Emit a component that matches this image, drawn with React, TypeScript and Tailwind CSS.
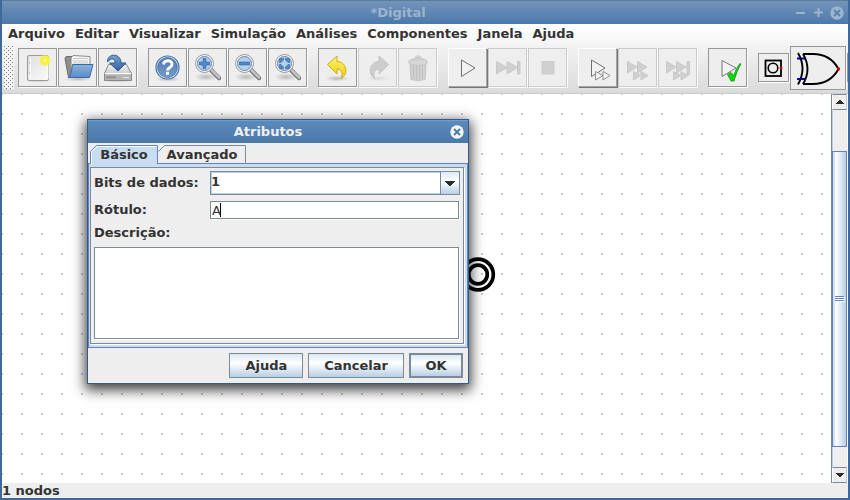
import type { ReactNode } from "react";

type Variant = "normal" | "disabled" | "raised";

function ToolButton({ label, variant = "normal", children }: { label: string; variant?: Variant; children: ReactNode }) {
  const look = {
    normal: "border border-[#969896] shadow-[1px_1px_0_#fff]",
    disabled: "border border-[#cbcbcb] shadow-[1px_1px_0_#fbfbfb]",
    raised: "border border-t-white border-l-white border-r-[#a5a5a5] border-b-[#a5a5a5] shadow-[1px_1px_0_#757575]",
  }[variant];
  return (
    <button type="button" aria-label={label} disabled={variant === "disabled"} className={`flex size-[39px] shrink-0 items-center justify-center bg-[#eeeeee] ${look}`}>
      {children}
    </button>
  );
}

function Glyph({ children }: { children: ReactNode }) {
  return (
    <svg viewBox="0 0 37 37" className="size-[37px]" aria-hidden="true">
      {children}
    </svg>
  );
}

function Group({ children }: { children: ReactNode }) {
  return <div className="flex shrink-0 items-center gap-px">{children}</div>;
}

function Defs() {
  return (
    <svg className="absolute size-0" aria-hidden="true">
      <defs>
        <radialGradient id="glow">
          <stop offset="0" stopColor="#fffde0" />
          <stop offset="0.35" stopColor="#f8f02a" />
          <stop offset="0.7" stopColor="#f7f13a" stopOpacity="0.8" />
          <stop offset="1" stopColor="#f5f060" stopOpacity="0" />
        </radialGradient>
        <radialGradient id="shade">
          <stop offset="0" stopColor="#000" stopOpacity="0.22" />
          <stop offset="1" stopColor="#000" stopOpacity="0" />
        </radialGradient>
        <linearGradient id="page" x1="0" y1="0" x2="1" y2="1">
          <stop offset="0" stopColor="#dedede" />
          <stop offset="1" stopColor="#fbfbfb" />
        </linearGradient>
        <linearGradient id="folder" x1="0" y1="0" x2="0" y2="1">
          <stop offset="0" stopColor="#8ab2de" />
          <stop offset="1" stopColor="#5a8dc8" />
        </linearGradient>
        <linearGradient id="metal" x1="0" y1="0" x2="0" y2="1">
          <stop offset="0" stopColor="#f2f2f2" />
          <stop offset="1" stopColor="#b2b2b2" />
        </linearGradient>
        <linearGradient id="arrow" x1="0" y1="0" x2="0" y2="1">
          <stop offset="0" stopColor="#7ba3d2" />
          <stop offset="1" stopColor="#2f5f9d" />
        </linearGradient>
        <linearGradient id="ball" x1="0" y1="0" x2="0" y2="1">
          <stop offset="0" stopColor="#4a76ae" />
          <stop offset="1" stopColor="#7a9dca" />
        </linearGradient>
        <linearGradient id="gold" x1="0" y1="0" x2="0" y2="1">
          <stop offset="0" stopColor="#fff27a" />
          <stop offset="1" stopColor="#edd000" />
        </linearGradient>
      </defs>
    </svg>
  );
}

function Lens({ sign }: { sign: string }) {
  return (
    <Glyph>
      <ellipse cx="17" cy="28" rx="12" ry="4" fill="url(#shade)" />
      <path d="M22.5 21.5 30 29" stroke="#777" strokeWidth="4.5" strokeLinecap="round" />
      <path d="M23 21.5 30 28.5" stroke="#c3c3c3" strokeWidth="2.5" strokeLinecap="round" />
      <circle cx="15.5" cy="14.5" r="9" fill="#f6f6f6" stroke="#999b98" />
      <circle cx="15.5" cy="14.5" r="7" fill="#b8cfe9" stroke="#6688b3" />
      <path d={sign} fill="#5287c5" stroke="#3465a4" strokeWidth="0.6" />
    </Glyph>
  );
}

const play = "M13 11.5 27 19 13 27.5Z";

function MainToolbar() {
  return (
    <div role="toolbar" aria-label="Ferramentas" className="flex h-[45px] items-center gap-[11px] overflow-hidden pl-0.5">
      <svg className="-mr-[7px] h-[43px] w-2.5 shrink-0" aria-hidden="true">
        <pattern id="grip" width="4" height="4" patternUnits="userSpaceOnUse">
          <rect width="4" height="4" fill="#f4f4f4" />
          <path d="M0 0h1v1H0zM2 2h1v1H2z" fill="#777d85" />
        </pattern>
        <rect width="100%" height="100%" fill="url(#grip)" shapeRendering="crispEdges" />
      </svg>
      <Group>
        <ToolButton label="Novo">
          <Glyph>
            <ellipse cx="19" cy="31.500" rx="13" ry="2" fill="url(#shade)" />
            <rect x="8.500" y="6.500" width="21" height="25" rx="1.500" fill="url(#page)" stroke="#9b9b99" />
            <path d="M11.500 8v22M29 8v22" stroke="#fff" />
            <circle cx="10.500" cy="14" r="0.700" fill="#aaa" />
            <circle cx="10.500" cy="24" r="0.700" fill="#aaa" />
            <circle cx="26" cy="11.500" r="6.500" fill="url(#glow)" />
          </Glyph>
        </ToolButton>
        <ToolButton label="Abrir">
          <Glyph>
            <ellipse cx="19" cy="30" rx="14" ry="2.500" fill="url(#shade)" />
            <path d="M6 9.500q0-2 2-2h5l1.500 2h4v19H9.500Z" fill="#8e908c" stroke="#6c6e6a" />
            <path d="m12 9 2-2.500 17 1V21H12Z" fill="#f5f5f5" stroke="#888a85" />
            <path d="M14 9.500h15M14 12h15M14 14h15" stroke="#c8c8c8" />
            <path d="M13.500 15.500h20.500l-3.500 13H9.500q2.500-2 4-13Z" fill="url(#folder)" stroke="#3769a9" />
          </Glyph>
        </ToolButton>
        <ToolButton label="Salvar">
          <Glyph>
            <ellipse cx="19" cy="31.500" rx="14" ry="2" fill="url(#shade)" />
            <path d="M9.500 15.500h18l5 9v7h-27v-7Z" fill="url(#metal)" stroke="#898989" strokeLinejoin="round" />
            <path d="M6 24.500h26" stroke="#fff" />
            <path d="M6 25.500h26v5.500H6z" fill="#b5b5b5" />
            <path d="M8 27v2.500m2-2.500v2.500m2-2.500v2.500m2-2.500v2.500m2-2.500v2.500" stroke="#777" />
            <path d="M24 28.500h6" stroke="#e7e7e7" />
            <path d="M8.500 13C8 4 22 3.500 22 14h5l-8 8-8.500-8H16c0-4.500-3.500-6-7.500-1Z" fill="url(#arrow)" stroke="#2f5d98" strokeLinejoin="round" />
          </Glyph>
        </ToolButton>
      </Group>
      <Group>
        <ToolButton label="Ajuda">
          <Glyph>
            <ellipse cx="19" cy="30" rx="13" ry="3" fill="url(#shade)" />
            <circle cx="18.500" cy="18.500" r="11.500" fill="#fff" stroke="#3f6fa9" strokeWidth="1.200" />
            <circle cx="18.500" cy="18.500" r="10" fill="url(#ball)" stroke="#3e6daa" strokeWidth="0.800" />
            <path d="M14.500 15.500c.5-5 9-5 8.500 0 0 3-4.500 3-4.500 6" fill="none" stroke="#fff" strokeWidth="3" />
            <rect x="17" y="22.800" width="3" height="3" rx="0.600" fill="#fff" />
          </Glyph>
        </ToolButton>
        <ToolButton label="Aumentar zoom">
          <Lens sign="M14 9.500h3V13h3.500v3H17v3.500h-3V16h-3.500v-3H14Z" />
        </ToolButton>
        <ToolButton label="Diminuir zoom">
          <Lens sign="M10.500 13h10v3h-10Z" />
        </ToolButton>
        <ToolButton label="Ajustar zoom">
          <Lens sign="M10.500 9.500h4v1.500l-2.500 2.500h-1.500ZM16.500 9.500h4v4h-1.500l-2.500-2.500ZM10.500 15.500H12l2.500 2.500v1.500h-4ZM20.500 15.500v4h-4V18l2.500-2.500Z" />
        </ToolButton>
      </Group>
      <Group>
        <ToolButton label="Desfazer">
          <Glyph>
            <ellipse cx="18" cy="29.500" rx="12" ry="3" fill="url(#shade)" />
            <path d="M8.500 15.500 18 7v5.500c9 0 12.500 12 4 17 3-6-.5-9.500-4-9.500v5Z" fill="url(#gold)" stroke="#c7a600" strokeWidth="0.900" strokeLinejoin="round" />
          </Glyph>
        </ToolButton>
        <ToolButton label="Refazer" variant="disabled">
          <Glyph>
            <ellipse cx="19" cy="29.500" rx="12" ry="3" fill="url(#shade)" opacity="0.400" />
            <path d="M29.500 15.500 20 7v5.500c-9 0-12.500 12-4 17-3-6 .5-9.500 4-9.500v5Z" fill="#cdcdcd" stroke="#c1c1c1" strokeWidth="0.900" strokeLinejoin="round" />
          </Glyph>
        </ToolButton>
        <ToolButton label="Apagar" variant="disabled">
          <Glyph>
            <path d="M11 15.500h16l-1 15q-7 2-14 0Z" fill="#d0d0d0" stroke="#c4c4c4" />
            <path d="M14.500 17v12M17.500 17v13M20.500 17v13M23.500 17v12" stroke="#c0c0c0" />
            <ellipse cx="19" cy="13" rx="9.500" ry="3.500" fill="#d6d6d6" stroke="#c4c4c4" />
            <path d="M14 11.500c0-4 10-4 10 0" fill="#cfcfcf" stroke="#c4c4c4" />
            <path d="M16.500 8c0-1.500 5-1.500 5 0" fill="none" stroke="#bdbdbd" />
          </Glyph>
        </ToolButton>
      </Group>
      <Group>
        <ToolButton label="Iniciar simulação" variant="raised">
          <Glyph>
            <path d="M12.500 11 26 19l-13.500 8.500Z" fill="#f2f2f2" stroke="#6e706c" />
          </Glyph>
        </ToolButton>
        <ToolButton label="Executar até parar" variant="disabled">
          <Glyph>
            <path d="M7.500 12.500 18 18.500l-10.500 6.500ZM18 12.500l10.500 6L18 25ZM28.500 12.500h2.500V25h-2.500Z" fill="#d0d0d0" stroke="#c8c8c8" />
          </Glyph>
        </ToolButton>
        <ToolButton label="Parar" variant="disabled">
          <Glyph>
            <path d="M13 12.500h12V25H13Z" fill="#d0d0d0" stroke="#cccccc" />
          </Glyph>
        </ToolButton>
      </Group>
      <Group>
        <ToolButton label="Passo" variant="raised">
          <Glyph>
            <path d="M12.500 11 26 19l-13.500 8.500Z" fill="#f2f2f2" stroke="#6e706c" />
            <path d="m16.500 22.500 7.500 4-7.500 4.500ZM24 22.500l7 4-7 4.500Z" fill="#f5f5f5" stroke="#858784" strokeWidth="0.900" />
          </Glyph>
        </ToolButton>
        <ToolButton label="Avançar" variant="disabled">
          <Glyph>
            <path d="M8.500 12.500 18 18l-9.500 6ZM18.500 12.500l9.500 5.500-9.500 6ZM14.500 22.500l7 4-7 4.500ZM22 22.500l7 4-7 4.500Z" fill="#d0d0d0" stroke="#c8c8c8" />
          </Glyph>
        </ToolButton>
        <ToolButton label="Avançar até parar" variant="disabled">
          <Glyph>
            <path d="M7.500 12.500 17 18l-9.500 6ZM17.500 12.500l9.500 5.500-9.500 6ZM28 12.500h2.500V26H28ZM14.500 22.500l7 4-7 4.500ZM22 22.500l7 4-7 4.500Z" fill="#d0d0d0" stroke="#c8c8c8" />
          </Glyph>
        </ToolButton>
      </Group>
      <Group>
        <ToolButton label="Executar testes">
          <Glyph>
            <path d={play} fill="#f2f2f2" stroke="#777975" />
            <path d="m18.500 25.500 3.500-2 3 3c1-4 3.500-9 6-12l1 .5c-3 4.500-5 10-7 17h-3Z" fill="#0fd80f" stroke="#159a15" strokeWidth="0.900" strokeLinejoin="round" />
          </Glyph>
        </ToolButton>
      </Group>
      <Group>
        <button type="button" aria-label="Entrada" className="flex h-[29px] w-[31px] shrink-0 items-center justify-center border border-[#969896] bg-[#eeeeee] shadow-[1px_1px_0_#fff]">
          <svg viewBox="0 0 29 27" className="h-[27px] w-[29px]" aria-hidden="true">
            <rect x="6.500" y="6.500" width="15.500" height="15.500" fill="none" stroke="#000" strokeWidth="1.800" />
            <circle cx="14" cy="14" r="4.800" fill="none" stroke="#000" strokeWidth="1.600" />
            <circle cx="22" cy="14" r="1.500" fill="#d00" />
          </svg>
        </button>
        <button type="button" aria-label="XOU" className="flex h-[44px] w-14 shrink-0 items-center justify-center border border-[#969896] bg-[#eeeeee] shadow-[1px_1px_0_#fff]">
          <svg viewBox="0 0 54 42" className="h-[42px] w-[54px]" fill="none" aria-hidden="true">
            <path d="M6 11.500h8M6 32h8" stroke="#0000c8" strokeWidth="2" />
            <path d="M7 6q9 15.500 0 31.500M12 7q9 15 0 30M12 7h10c12 0 20 5 25.500 15-5.500 10-13.500 15-25.500 15H12" stroke="#000" strokeWidth="1.900" />
            <circle cx="47.500" cy="22" r="1.700" fill="#d00" />
          </svg>
        </button>
        <button type="button" aria-label="Próximo componente" className="h-[29px] w-[31px] shrink-0 border border-[#969896] bg-[#eeeeee]" />
      </Group>
    </div>
  );
}

function CloseIcon({ disc, cross }: { disc: string; cross: string }) {
  return (
    <svg viewBox="0 0 14 14" className="size-3.5" aria-hidden="true">
      <circle cx="7" cy="7" r="6.700" fill={disc} />
      <path d="m4 4 6 6m0-6-6 6" stroke={cross} strokeWidth="1.800" />
    </svg>
  );
}

function Triangle({ up = false }: { up?: boolean }) {
  return (
    <svg viewBox="0 0 8 4" className="h-1 w-2" shapeRendering="crispEdges" aria-hidden="true">
      <path d={up ? "M3 0h2v1h1v1h1v1h1v1H0V3h1V2h1V1h1Z" : "M0 0h8v1H7v1H6v1H5v1H3V3H2V2H1V1H0Z"} fill="#2b2b2b" />
    </svg>
  );
}

function ScrollBar() {
  return (
    <div role="scrollbar" aria-label="Rolagem vertical" aria-controls="circuito" aria-valuenow={30} className="flex w-[17px] shrink-0 flex-col border-r border-l border-r-white border-l-[#7a8a99] bg-[#eeeeee]">
      <button type="button" aria-label="Rolar para cima" className="flex h-4 items-center justify-center border border-t-[#7a8a99] border-r-[#b8cfe5] border-b-[#7a8a99] border-l-white">
        <Triangle up />
      </button>
      <div className="flex flex-1 flex-col border-l border-[#b8cfe5]">
        <div className="flex-[41]" />
        <div className="-ml-px flex flex-[296] items-center justify-center border border-[#6382bf] bg-linear-to-r from-[#c3d7ec] via-white via-25% to-[#b8cfe5]">
          <svg viewBox="0 0 10 6" className="h-1.5 w-2.5" shapeRendering="crispEdges" aria-hidden="true">
            <path d="M1 1h9v1H1zM1 3h9v1H1zM1 5h9v1H1z" fill="#fff" />
            <path d="M0 0h9v1H0zM0 2h9v1H0zM0 4h9v1H0z" fill="#6382bf" />
          </svg>
        </div>
        <div className="flex-[20]" />
      </div>
      <button type="button" aria-label="Rolar para baixo" className="flex h-4 items-center justify-center border border-t-[#7a8a99] border-r-[#b8cfe5] border-b-[#7a8a99] border-l-white">
        <Triangle />
      </button>
    </div>
  );
}

function DialogButton({ children, main = false }: { children: ReactNode; main?: boolean }) {
  return (
    <button type="button" className={`h-[25px] bg-linear-to-b from-[#dde8f3] via-white via-40% to-[#b8cfe5] text-center ${main ? "w-[54px] border-2 border-[#7a8a99]" : "border border-[#7a8a99] px-[15px]"}`}>
      {children}
    </button>
  );
}

function AttributesDialog() {
  return (
    <section role="dialog" aria-labelledby="dialog-title" className="absolute top-[119px] left-[85px] w-[382px] border border-[#335b87] bg-[#eeeeee] shadow-[0_4px_12px_2px_rgba(0,0,0,0.75)]">
      <header className="relative flex h-[23px] items-center justify-center border-t border-[#6a9fd8] bg-linear-to-b from-[#5c8abb] to-[#4a78a8] pr-5 text-[#eef0f2]">
        <h2 id="dialog-title">Atributos</h2>
        <button type="button" aria-label="Fechar" className="absolute right-1 text-white">
          <CloseIcon disc="#f2f5f8" cross="#4b78aa" />
        </button>
      </header>
      <div role="tablist" className="mt-0.5 flex h-[18px] pl-0.5">
        <button type="button" role="tab" aria-selected="true" className="relative z-10 h-[19px] w-[68px]">
          <svg viewBox="0 0 68 19" className="absolute inset-0 size-full" aria-hidden="true">
            <path d="M.5 20V6.500l6-6h61V20" fill="#c8ddf2" stroke="#6382bf" />
            <path d="M1.500 20V7L7 1.500h60" fill="none" stroke="#fff" />
          </svg>
          <span className="relative">Básico</span>
        </button>
        <button type="button" role="tab" aria-selected="false" className="relative h-[19px] w-[88px]">
          <svg viewBox="0 0 88 19" className="absolute inset-0 size-full" aria-hidden="true">
            <path d="M.5 6.500l6-6h81V19" fill="none" stroke="#7a8a99" />
          </svg>
          <span className="relative">Avançado</span>
        </button>
      </div>
      <div role="tabpanel" className="border border-[#6382bf] bg-[#c8ddf2] py-[3px] pr-[3px] pl-px">
        <div className="border border-[#7a8a99] bg-[#eeeeee] px-[3px] pt-[3px] pb-1 shadow-[1px_1px_0_#fff]">
          <div className="grid grid-cols-[116px_1fr] items-center">
            <label htmlFor="bits">Bits de dados:</label>
            <div className="relative h-6">
              <select id="bits" defaultValue="1" className="h-full w-full appearance-none border border-[#7a8a99] bg-white pb-0.5 shadow-[inset_0_0_0_1px_#b8cfe5]">
                <option>1</option>
                <option>2</option>
              </select>
              <span className="pointer-events-none absolute inset-y-0 right-0 flex w-5 items-center justify-center border border-[#7a8a99] bg-linear-to-b from-[#dde8f3] via-white via-40% to-[#b8cfe5]">
                <svg viewBox="0 0 10 5" className="h-[5px] w-2.5" shapeRendering="crispEdges" aria-hidden="true">
                  <path d="M0 0h10v1H9v1H8v1H7v1H6v1H4V4H3V3H2V2H1V1H0Z" fill="#2b2b2b" />
                </svg>
              </span>
            </div>
            <label htmlFor="rotulo">Rótulo:</label>
            <div className="relative my-1.5 mr-px h-[18px]">
              <input id="rotulo" type="text" defaultValue="A" className="block h-full w-full border border-[#7a8a99] bg-white pl-px font-normal caret-transparent shadow-[1px_1px_0_#fff] outline-none" />
              <span className="absolute top-0.5 left-2.5 h-3.5 w-px bg-black" />
            </div>
          </div>
          <label htmlFor="descricao" className="block h-[22px]">
            Descrição:
          </label>
          <textarea id="descricao" className="mr-px block h-[92px] w-[calc(100%-1px)] resize-none border border-[#7a8a99] bg-white shadow-[1px_1px_0_#fff] outline-none" />
        </div>
      </div>
      <footer className="flex justify-end gap-[5px] p-[5px]">
        <DialogButton>Ajuda</DialogButton>
        <DialogButton>Cancelar</DialogButton>
        <DialogButton main>OK</DialogButton>
      </footer>
    </section>
  );
}

const menus = ["Arquivo", "Editar", "Visualizar", "Simulação", "Análises", "Componentes", "Janela", "Ajuda"];

export default function App() {
  return (
    <div className="relative flex h-screen flex-col overflow-hidden border-x-2 border-b-2 border-[#3d6a9b] bg-[#eeeeee] font-['DejaVu_Sans',sans-serif] text-[13px] leading-4 font-bold text-[#333333]">
      <Defs />
      <header className="-mx-0.5 flex h-6 shrink-0 items-center border-t border-[#5a7c99] bg-linear-to-b from-[#7394ba] to-[#4c79aa] pr-1.5 text-[#9cb4ce]">
        <h1 className="flex-1 text-center">*Digital</h1>
        <div className="flex items-center gap-[9px]">
          <button type="button" aria-label="Minimizar">
            <svg viewBox="0 0 9 9" className="size-[9px]" aria-hidden="true"><path d="M0 5h9" stroke="currentColor" strokeWidth="2" /></svg>
          </button>
          <button type="button" aria-label="Maximizar">
            <svg viewBox="0 0 9 9" className="size-[9px]" aria-hidden="true"><path d="M0 4.500h9M4.500 0v9" stroke="currentColor" strokeWidth="2" /></svg>
          </button>
          <button type="button" aria-label="Fechar janela" className="-ml-0.5">
            <CloseIcon disc="#9cb4ce" cross="#5a82af" />
          </button>
        </div>
      </header>
      <div className="shrink-0 border-b border-[#cccccc] bg-linear-to-b from-white to-[#dadada] pb-[3px]">
        <nav aria-label="Menu principal" className="flex h-[21px] items-center gap-2.5 pb-0.5 pl-1.5">
          {menus.map((name) => (
            <button type="button" key={name}>{name}</button>
          ))}
        </nav>
        <MainToolbar />
      </div>
      <main className="flex min-h-0 flex-1">
        <div id="circuito" className="min-w-0 flex-1 bg-white">
          <svg className="block size-full" role="img" aria-label="Circuito">
            <pattern id="dots" x="-1" y="-1" width="20" height="20" patternUnits="userSpaceOnUse">
              <rect width="2" height="2" fill="#cccccc" />
            </pattern>
            <rect width="100%" height="100%" fill="url(#dots)" shapeRendering="crispEdges" />
            <g fill="none" stroke="#000" strokeWidth="3.700">
              <circle cx="476" cy="180.500" r="15.300" />
              <circle cx="476" cy="180.500" r="9.300" />
            </g>
          </svg>
        </div>
        <ScrollBar />
      </main>
      <footer className="h-[15px] shrink-0 leading-[15px]">1 nodos</footer>
      <AttributesDialog />
    </div>
  );
}
